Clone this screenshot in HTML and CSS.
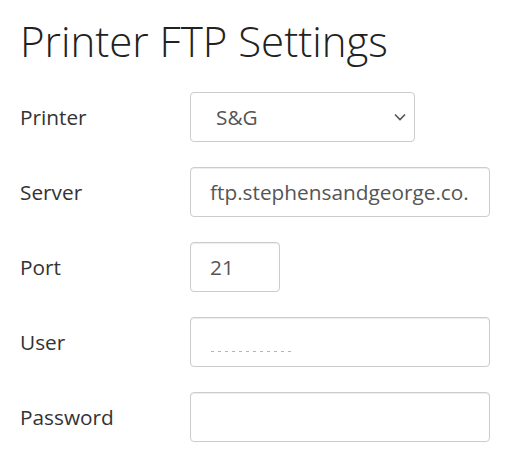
FILE: index.html
```html
<!DOCTYPE html>
<html lang="en">
<head>
    <meta charset="UTF-8">
    <title>Printer FTP Settings</title>
    <link rel="stylesheet" href="styles.css">
</head>
<body>
    <div class="container">
        <h1>Printer FTP Settings</h1>
        <form class="settings">
            <div class="row">
                <label for="printer">Printer</label>
                <select id="printer" class="field select">
                    <option>S&amp;G</option>
                </select>
            </div>
            <div class="row">
                <label for="server">Server</label>
                <input type="text" id="server" class="field wide" value="ftp.stephensandgeorge.co.uk">
            </div>
            <div class="row">
                <label for="port">Port</label>
                <input type="text" id="port" class="field short" value="21">
            </div>
            <div class="row">
                <label for="user">User</label>
                <input type="text" id="user" class="field wide masked" value="">
            </div>
            <div class="row">
                <label for="password">Password</label>
                <input type="password" id="password" class="field wide" value="">
            </div>
        </form>
    </div>
</body>
</html>
```

FILE: styles.css
```css
body {
    margin: 0;
    background: #fff;
    font-family: 'Open Sans', sans-serif;
    color: #333;
}
.container {
    padding: 14px 20px 20px 20px;
}
h1 {
    margin: 0 0 24px 0;
    font-size: 42px;
    font-weight: 300;
    line-height: 54px;
    color: #222;
}
.settings {
    display: flex;
    flex-direction: column;
    gap: 25px;
}
.row {
    display: flex;
    align-items: center;
    height: 50px;
}
.row label {
    width: 170px;
    font-size: 20.8px;
}
.field {
    box-sizing: border-box;
    height: 50px;
    padding: 0 19px;
    border: 1px solid #ccc;
    border-radius: 4px;
    box-shadow: inset 0 1px 1px rgba(0, 0, 0, 0.075);
    font-family: 'Open Sans', sans-serif;
    font-size: 20.8px;
    color: #555;
    background-color: #fff;
    outline: none;
}
.wide {
    width: 300px;
}
.short {
    width: 90px;
}
.select {
    width: 225px;
    padding-left: 25px;
    appearance: none;
    -webkit-appearance: none;
    box-shadow: none;
    background-image: url("data:image/svg+xml;utf8,<svg xmlns='http://www.w3.org/2000/svg' width='12' height='8' viewBox='0 0 12 8'><path d='M1 1.5 L6 6.5 L11 1.5' fill='none' stroke='%23555' stroke-width='1.6'/></svg>");
    background-repeat: no-repeat;
    background-position: right 8px center;
}
.masked {
    background-image: repeating-linear-gradient(to right, #b5b5b5 0 3px, transparent 3px 7px);
    background-size: 84px 1px;
    background-position: 20px 33px;
    background-repeat: no-repeat;
}
```
